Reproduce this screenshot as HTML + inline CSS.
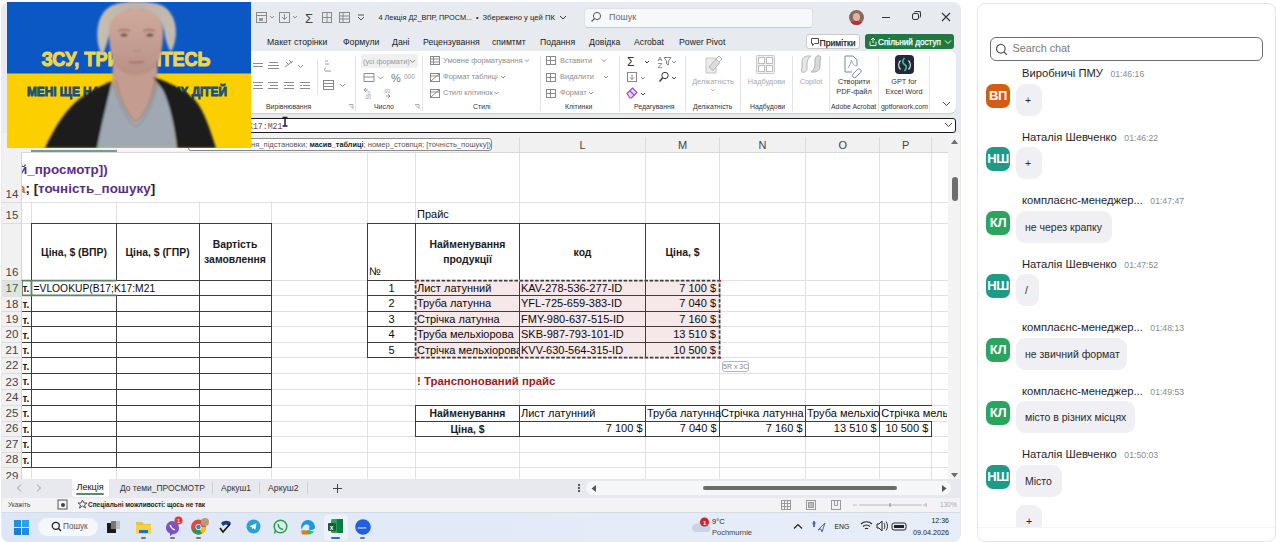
<!DOCTYPE html>
<html><head><meta charset="utf-8">
<style>
*{margin:0;padding:0;box-sizing:border-box}
html,body{width:1276px;height:542px;overflow:hidden;background:#fff;font-family:"Liberation Sans",sans-serif;color:#222}
.a{position:absolute;white-space:nowrap}
#xl{position:absolute;left:0;top:0;width:962px;height:542px;overflow:hidden}
#chat{position:absolute;left:977px;top:2.5px;width:299px;height:539px;border:1px solid #e6e6e6;border-radius:8px;background:#fff;overflow:hidden}
.av{position:absolute;width:24px;height:24px;border-radius:7px;color:#fff;font-weight:bold;font-size:13px;text-align:center;line-height:24px;letter-spacing:-0.4px}
.nm{position:absolute;font-size:11.2px;color:#1e1e1e;white-space:nowrap}
.ts{font-size:8.7px;color:#8a8a8a;margin-left:7.5px}
.bb{position:absolute;background:#f0f0f4;border-radius:9px;height:32px;font-size:10.5px;color:#2a2a2a;line-height:32px;padding:0 9px;white-space:nowrap}

</style></head><body>
<div id="xl">
<div class="a" style="left:1px;top:2px;width:960px;height:540px;background:#e7ebef;border-radius:8px"></div>
<!-- title bar icons -->
<svg class="a" style="left:250px;top:8px" width="130" height="20" viewBox="0 0 130 20">
 <g fill="none" stroke="#8a8a8a" stroke-width="1">
  <rect x="6.5" y="4.5" width="10" height="10"/><line x1="6.5" y1="7.5" x2="16.5" y2="7.5"/><rect x="9" y="10" width="4" height="3" fill="#9a9a9a" stroke="none"/>
  <polyline points="20,8 22,10 24,8"/>
  <rect x="29.5" y="4.5" width="10" height="10"/><polyline points="32,9 34.5,11.5 37,9"/><line x1="34.5" y1="6" x2="34.5" y2="11.5"/>
  <polyline points="43,8 45,10 47,8"/>
  <rect x="72.5" y="4.5" width="9" height="10"/><line x1="77" y1="4.5" x2="77" y2="14.5"/><line x1="72.5" y1="9.5" x2="81.5" y2="9.5"/>
  <rect x="89.5" y="4.5" width="10" height="10"/><line x1="89.5" y1="8" x2="99.5" y2="8"/><line x1="89.5" y1="11" x2="99.5" y2="11"/><line x1="93" y1="4.5" x2="93" y2="14.5"/>
  <polyline points="108,9 111,12 114,9" stroke="#555"/><line x1="108" y1="7" x2="114" y2="7" stroke="#555"/>
 </g>
 <text x="55" y="15" font-family="Liberation Sans" font-size="13" fill="#444">Σ</text>
</svg>
<div class="a" style="left:378.5px;top:12.5px;font-size:7.3px;color:#222">4 Лекція Д2_ВПР, ПРОСМ...</div><div class="a" style="left:476px;top:12.5px;font-size:7.3px;color:#222">•</div><div class="a" style="left:482.5px;top:12.5px;font-size:7.65px;color:#222">Збережено у цей ПК</div><svg class="a" style="left:559px;top:15px" width="8" height="6"><polyline points="1,1 4,4 7,1" fill="none" stroke="#333" stroke-width="1"/></svg>
<div class="a" style="left:584px;top:8px;width:229px;height:19.5px;background:#f7f8f9;border:1px solid #dfe1e4;border-bottom-color:#c9ccd0;border-radius:4px"></div>
<svg class="a" style="left:590px;top:11px" width="12" height="12" viewBox="0 0 12 12"><circle cx="7" cy="5" r="3.6" fill="none" stroke="#555" stroke-width="1"/><line x1="4.4" y1="7.6" x2="1.5" y2="10.5" stroke="#555" stroke-width="1.1"/></svg>
<div class="a" style="left:609px;top:12px;font-size:9px;color:#6b6b6b">Пошук</div>
<div class="a" style="left:849px;top:10px;width:15px;height:15px;border-radius:50%;overflow:hidden;background:#8a6a5a"><div class="a" style="left:4px;top:3px;width:7px;height:8px;border-radius:50%;background:#e0b4a4"></div><div class="a" style="left:1px;top:11px;width:13px;height:6px;border-radius:50%;background:#b8303a"></div></div>
<div class="a" style="left:882px;top:17px;width:8px;height:1px;background:#333"></div>
<div class="a" style="left:912px;top:13px;width:7px;height:7px;border:1px solid #333;border-radius:2px"></div>
<div class="a" style="left:914px;top:11px;width:7px;height:7px;border-top:1px solid #333;border-right:1px solid #333;border-radius:2px"></div>
<svg class="a" style="left:941px;top:12px" width="10" height="10" viewBox="0 0 10 10"><path d="M1 1L9 9M9 1L1 9" stroke="#333" stroke-width="1.1"/></svg>
<!-- tabs -->
<div class="a" style="left:267px;top:37px;font-size:8.7px;color:#222">Макет сторінки</div>
<div class="a" style="left:343px;top:37px;font-size:8.7px;color:#222">Формули</div>
<div class="a" style="left:392px;top:37px;font-size:8.7px;color:#222">Дані</div>
<div class="a" style="left:423px;top:37px;font-size:8.7px;color:#222">Рецензування</div>
<div class="a" style="left:492px;top:37px;font-size:8.7px;color:#222">спимтмт</div>
<div class="a" style="left:540px;top:37px;font-size:8.7px;color:#222">Подання</div>
<div class="a" style="left:589px;top:37px;font-size:8.7px;color:#222">Довідка</div>
<div class="a" style="left:634px;top:37px;font-size:8.7px;color:#222">Acrobat</div>
<div class="a" style="left:679px;top:37px;font-size:8.7px;color:#222">Power Pivot</div>
<div class="a" style="left:806px;top:34px;width:54px;height:15px;background:#fff;border:1px solid #c9c9c9;border-radius:3px"></div>
<svg class="a" style="left:810px;top:37px" width="10" height="10" viewBox="0 0 10 10"><path d="M1.5 1.5h7v5h-4l-2 2v-2h-1z" fill="none" stroke="#333" stroke-width="0.9"/></svg>
<div class="a" style="left:819.5px;top:37.5px;font-size:8.6px;color:#222;-webkit-text-stroke:0.25px #222">Примітки</div>
<div class="a" style="left:865px;top:34px;width:89px;height:15px;background:#1f7a3f;border-radius:3px"></div>
<svg class="a" style="left:868px;top:37px" width="10" height="10" viewBox="0 0 10 10"><path d="M2 4.5v4h6v-4M5 1v5M3 3l2-2 2 2" fill="none" stroke="#fff" stroke-width="0.9"/></svg>
<div class="a" style="left:878px;top:37.5px;font-size:8.2px;color:#fff;-webkit-text-stroke:0.25px #fff">Спільний доступ</div>
<svg class="a" style="left:944px;top:39px" width="8" height="6" viewBox="0 0 8 6"><polyline points="1,1.5 4,4.5 7,1.5" fill="none" stroke="#fff" stroke-width="1"/></svg>

<div class="a" style="left:100px;top:51px;width:856px;height:62px;background:#fff;border-radius:6px;box-shadow:0 1px 1px rgba(0,0,0,0.12)"></div>
<!-- alignment group icons -->
<svg class="a" style="left:250px;top:51px" width="710" height="62" viewBox="250 51 710 62">
 <g stroke="#8c8c8c" stroke-width="1" fill="none">
  <!-- row1 align -->
  <path d="M253 63.5h10M253 66.5h10"/>
  <path d="M268 65.5h11M268 68.5h11M269 62.5h9"/>
  <path d="M285 67l8-6M286 62l3 3M289 60l3 3"/>
  <polyline points="298,65 300.5,67.5 303,65"/>
  <!-- row2 -->
  <path d="M253 82.5h10M254 85.5h8M253 88.5h10"/>
  <path d="M268 82.5h10M270 85.5h8M268 88.5h10"/>
  <path d="M284 82.5h10M287 85.5h7M284 88.5h10M284 85.5h2"/>
  <path d="M300 82.5h10M303 85.5h7M300 88.5h10M300 85.5h2"/>
  <line x1="317.5" y1="59" x2="317.5" y2="95" stroke="#e3e3e3"/>
  <!-- wrap / merge -->
  <path d="M325 61h3M325 64h4M326 68c-2 0-2 3 0 3h5" stroke="#999"/>
  <rect x="323.5" y="80.5" width="10" height="9" stroke="#888"/><path d="M323.5 83.5h10M323.5 86.5h10"/>
  <polyline points="340,84 342.5,86.5 345,84"/>
  <path d="M349 104.5h4v4M353 108.5l-3-3" stroke="#aaa"/>
  <line x1="355.5" y1="56" x2="355.5" y2="111" stroke="#e3e3e3"/>
  <!-- number -->
  <path d="M364 73.5h10v8h-10zM364 77h10" stroke="#8c8c8c"/>
  <polyline points="378,76.5 380.5,79 383,76.5"/>
  <path d="M364 90h4M364 90l2-2M364 90l2 2M386 96h4M390 96l-2-2M390 96l-2 2" stroke="#999"/>
  <path d="M415 104.5h4v4M419 108.5l-3-3" stroke="#aaa"/>
  <line x1="422.5" y1="56" x2="422.5" y2="111" stroke="#e3e3e3"/>
  <!-- styles icons -->
  <rect x="430.5" y="56.5" width="9" height="8" stroke="#888"/><path d="M430.5 59h9M430.5 62h9M433.5 56.5v8"/>
  <rect x="430.5" y="73.5" width="9" height="8" stroke="#888"/><path d="M431 81l8-7M430.5 76h9"/>
  <rect x="430.5" y="89.5" width="9" height="8" stroke="#888"/><path d="M431 97l8-7M430.5 92h9"/>
  <polyline points="525,59.5 527,61.5 529,59.5"/>
  <polyline points="501,76 503,78 505,76"/>
  <polyline points="494.5,92 496.5,94 498.5,92"/>
  <line x1="540.5" y1="56" x2="540.5" y2="111" stroke="#e3e3e3"/>
  <!-- cells icons -->
  <rect x="546.5" y="56.5" width="9" height="8" stroke="#888"/><path d="M546.5 60.5h9M550.5 56.5v8"/>
  <rect x="546.5" y="73.5" width="9" height="8" stroke="#888"/><path d="M546.5 77.5h9M550.5 73.5v8"/>
  <rect x="546.5" y="89.5" width="9" height="8" stroke="#888"/><path d="M546.5 93.5h9M550.5 89.5v8"/>
  <polyline points="602,59.5 604,61.5 606,59.5"/>
  <polyline points="604,76 606,78 608,76"/>
  <polyline points="589,92 591,94 593,92"/>
  <line x1="619.5" y1="56" x2="619.5" y2="111" stroke="#e3e3e3"/>
  <!-- editing -->
  <rect x="627.5" y="72.5" width="9" height="9" stroke="#888"/><path d="M632 74.5v5M630 77.5l2 2 2-2"/>
  <polyline points="645,61 647,63 649,61" stroke="#444"/>
  <polyline points="641,77 643,79 645,77"/>
  <polyline points="641,93 643,95 645,93" stroke="#444"/>
  <polyline points="672,61 674,63 676,61"/>
  <polyline points="672,77 674,79 676,77" stroke="#444"/>
  <circle cx="665" cy="75.5" r="3.2" stroke="#333"/><line x1="662.8" y1="77.8" x2="659.5" y2="81.5" stroke="#333" stroke-width="1.3"/>
  <path d="M658 61l2-4 2 4M658.7 59.8h2.6M658 63.5h4l-4 4h4" stroke="#777" stroke-width="0.8"/><path d="M664 57.5h7l-2.6 3.5v4l-1.8-1v-3z" stroke="#777" stroke-width="0.9"/>
  <line x1="685.5" y1="56" x2="685.5" y2="111" stroke="#e3e3e3"/>
  <!-- delikatnist icon -->
  <path d="M706 58h10v15h-10z" fill="#ececec" stroke="#c4c4c4"/><path d="M709 67l7-8 4 3.5-7 8z" fill="#dcdcdc" stroke="#b5b5b5"/><path d="M716 59l3-3 3 3-3 3" fill="none" stroke="#b5b5b5"/>
  <polyline points="711,89 713,91 715,89" stroke="#bbb"/>
  <line x1="740.5" y1="56" x2="740.5" y2="111" stroke="#e3e3e3"/>
  <!-- add-ins grid -->
  <rect x="756.5" y="55.5" width="18" height="18" rx="1" fill="#f1f1f1" stroke="#c8c8c8"/>
  <rect x="758.5" y="57.5" width="6" height="6" fill="#fff" stroke="#bdbdbd"/><rect x="766.5" y="57.5" width="6" height="6" fill="#fff" stroke="#bdbdbd"/>
  <rect x="758.5" y="65.5" width="6" height="6" fill="#fff" stroke="#bdbdbd"/><rect x="766.5" y="65.5" width="6" height="6" fill="#fff" stroke="#bdbdbd"/>
  <line x1="792.5" y1="56" x2="792.5" y2="111" stroke="#e3e3e3"/>
  <!-- copilot -->
  <path d="M802 62c0-4 3-6 6-6h3c-3 2-4 5-4 8v4c0 3-2 5-5 4-1-1-1-3 0-4z" fill="#e6e6e6" stroke="#b8b8b8"/><path d="M820 66c0 4-3 6-6 6h-3c3-2 4-5 4-8v-4c0-3 2-5 5-4 1 1 1 3 0 4z" fill="#d9d9d9" stroke="#b0b0b0"/>
  <line x1="829.5" y1="56" x2="829.5" y2="111" stroke="#e3e3e3"/>
  <!-- adobe -->
  <path d="M852 72h-7v-16h8l4 4v6" stroke="#6f86b8"/><path d="M848 68c2-3 3-5 3.5-8 .5 3 2 5 5 6.5" stroke="#8a9ccc" stroke-width="0.9"/>
  <path d="M853 74l4.5-4.5a2 2 0 0 1 3 3l-4.5 4.5a2 2 0 0 1-3-3z" stroke="#6f86b8"/>
  <line x1="878.5" y1="56" x2="878.5" y2="111" stroke="#e3e3e3"/>
  <line x1="929.5" y1="56" x2="929.5" y2="111" stroke="#e3e3e3"/>
  <polyline points="943,102 946.5,105.5 950,102" stroke="#444"/>
 </g>
 <g fill="#444" font-family="Liberation Sans">
  <text x="627" y="66" font-size="12" fill="#333">Σ</text>
  <text x="391" y="82" font-size="11" fill="#777">%</text>
  <text x="404" y="79" font-size="6.5" fill="#999">000</text>
  <text x="366" y="95" font-size="5" fill="#999">.0</text>
  <text x="364" y="99" font-size="5" fill="#999">.00</text>
  <text x="383" y="93" font-size="5" fill="#999">.00</text>
 </g>
 <!-- eraser purple -->
 <path d="M627 93.5l5.5-5.5 4.5 4.5-5.5 5.5h-1.5z" fill="#e9d3f3" stroke="#9a4cc4" stroke-width="1.1"/><path d="M630 91l4.5 4.5" stroke="#9a4cc4" stroke-width="1.1"/>
 <!-- gpt icon -->
 <rect x="895" y="55" width="19" height="19" rx="4" fill="#212a3b"/>
 <path d="M900.5 60.5c-2.5 2.5-2.5 6.5 0 9M908.5 60.5c2.5 2.5 2.5 6.5 0 9" stroke="#e8ecef" stroke-width="1.1" fill="none"/><path d="M904.5 58c-2.5 3-2.5 5 0 6.5s2.5 3.5 0 6.5c2.5-3 2.5-5 0-6.5s-2.5-3.5 0-6.5z" fill="#3fc1a6" stroke="#3fc1a6" stroke-width="1.6"/>
</svg>
<div class="a" style="left:361px;top:54px;width:57px;height:14px;background:#f0f0f0;border-radius:3px"></div>
<div class="a" style="left:363px;top:57px;font-size:7.4px;color:#9a9a9a">(усі формати)</div>
<svg class="a" style="left:409px;top:59px" width="7" height="5"><polyline points="1,1 3.5,3.5 6,1" fill="none" stroke="#888"/></svg>
<div class="a" style="left:443px;top:56px;font-size:7.5px;color:#8e8e8e">Умовне форматування</div>
<div class="a" style="left:443px;top:72px;font-size:7.5px;color:#8e8e8e">Формат таблиці</div>
<div class="a" style="left:443px;top:88px;font-size:7.5px;color:#8e8e8e">Стилі клітинок</div>
<div class="a" style="left:560px;top:56px;font-size:7.5px;color:#8e8e8e">Вставити</div>
<div class="a" style="left:560px;top:72px;font-size:7.5px;color:#8e8e8e">Видалити</div>
<div class="a" style="left:560px;top:88px;font-size:7.5px;color:#8e8e8e">Формат</div>
<div class="a" style="left:690px;top:77px;width:46px;text-align:center;font-size:7.3px;color:#a8a8a8">Делікатність</div>
<div class="a" style="left:744px;top:77px;width:45px;text-align:center;font-size:7.3px;color:#a8a8a8">Надбудови</div>
<div class="a" style="left:795px;top:77px;width:32px;text-align:center;font-size:7.3px;color:#a8a8a8">Copilot</div>
<div class="a" style="left:831px;top:77px;width:46px;text-align:center;font-size:7.3px;color:#333;line-height:9.5px">Створити<br>PDF-файл</div>
<div class="a" style="left:880px;top:77px;width:48px;text-align:center;font-size:7.3px;color:#333;line-height:9.5px">GPT for<br>Excel Word</div>
<div class="a" style="left:266px;top:103px;font-size:6.9px;color:#333">Вирівнювання</div>
<div class="a" style="left:374px;top:103px;font-size:6.9px;color:#333">Число</div>
<div class="a" style="left:473px;top:103px;font-size:6.9px;color:#333">Стилі</div>
<div class="a" style="left:565px;top:103px;font-size:6.9px;color:#333">Клітинки</div>
<div class="a" style="left:634px;top:103px;font-size:6.9px;color:#333">Редагування</div>
<div class="a" style="left:693px;top:103px;font-size:6.9px;color:#333">Делікатність</div>
<div class="a" style="left:750px;top:103px;font-size:6.9px;color:#333">Надбудови</div>
<div class="a" style="left:831px;top:103px;font-size:6.9px;color:#333">Adobe Acrobat</div>
<div class="a" style="left:881px;top:103px;font-size:6.9px;color:#333">gptforwork.com</div>
<!-- formula bar -->
<div class="a" style="left:200px;top:118px;width:756px;height:15px;background:#fff;border:1.6px solid #1a1a1a;border-radius:3px"></div>
<div class="a" style="left:248px;top:121.5px;font-family:'Liberation Mono',monospace;font-size:8.2px;color:#7e4646;letter-spacing:0px">K17:M21</div>
<svg class="a" style="left:281px;top:116px" width="8" height="12"><path d="M1.5 1.5h5M4 1.5v8.5M1.5 10h5" stroke="#24183a" stroke-width="1.5"/></svg>
<svg class="a" style="left:944px;top:122px" width="9" height="6"><polyline points="1,1 4.5,4.5 8,1" fill="none" stroke="#444" stroke-width="1"/></svg>

<div class="a" style="left:2px;top:133px;width:946px;height:20px;background:#f1f1f1;border-bottom:1px solid #d6d6d6"></div>
<div class="a" style="left:2px;top:152px;width:20px;height:327px;background:#f1f1f1;border-right:1px solid #d6d6d6"></div>
<div class="a" style="left:22px;top:153px;width:926px;height:326px;background:#fff"></div>
<div class="a" style="left:948px;top:133px;width:12px;height:346px;background:#f3f3f3"></div>
<svg class="a" style="left:950px;top:138px" width="9" height="8"><polygon points="1,6 4.5,1.5 8,6" fill="#6d6d6d"/></svg>
<svg class="a" style="left:950px;top:471px" width="9" height="8"><polygon points="1,2 4.5,6.5 8,2" fill="#6d6d6d"/></svg>
<div class="a" style="left:952px;top:177px;width:6px;height:24px;background:#6e6e6e;border-radius:3px"></div>
<div class="a" style="left:416px;top:281px;width:304px;height:77px;background:#f6e8e8"></div>
<svg class="a" style="left:0;top:0" width="962" height="542">
<line x1="22" y1="202.5" x2="948" y2="202.5" stroke="#e0e0e0"/>
<line x1="22" y1="223.5" x2="948" y2="223.5" stroke="#e0e0e0"/>
<line x1="22" y1="280.5" x2="948" y2="280.5" stroke="#e0e0e0"/>
<line x1="22" y1="295.5" x2="948" y2="295.5" stroke="#e0e0e0"/>
<line x1="22" y1="311.5" x2="948" y2="311.5" stroke="#e0e0e0"/>
<line x1="22" y1="326.5" x2="948" y2="326.5" stroke="#e0e0e0"/>
<line x1="22" y1="342.5" x2="948" y2="342.5" stroke="#e0e0e0"/>
<line x1="22" y1="357.5" x2="948" y2="357.5" stroke="#e0e0e0"/>
<line x1="22" y1="373.5" x2="948" y2="373.5" stroke="#e0e0e0"/>
<line x1="22" y1="389.5" x2="948" y2="389.5" stroke="#e0e0e0"/>
<line x1="22" y1="405.5" x2="948" y2="405.5" stroke="#e0e0e0"/>
<line x1="22" y1="421.5" x2="948" y2="421.5" stroke="#e0e0e0"/>
<line x1="22" y1="436.5" x2="948" y2="436.5" stroke="#e0e0e0"/>
<line x1="22" y1="452.5" x2="948" y2="452.5" stroke="#e0e0e0"/>
<line x1="22" y1="467.5" x2="948" y2="467.5" stroke="#e0e0e0"/>
<line x1="31.5" y1="202.5" x2="31.5" y2="223.5" stroke="#e0e0e0"/>
<line x1="31.5" y1="223.5" x2="31.5" y2="280.5" stroke="#e0e0e0"/>
<line x1="31.5" y1="280.5" x2="31.5" y2="295.5" stroke="#e0e0e0"/>
<line x1="31.5" y1="295.5" x2="31.5" y2="311.5" stroke="#e0e0e0"/>
<line x1="31.5" y1="311.5" x2="31.5" y2="326.5" stroke="#e0e0e0"/>
<line x1="31.5" y1="326.5" x2="31.5" y2="342.5" stroke="#e0e0e0"/>
<line x1="31.5" y1="342.5" x2="31.5" y2="357.5" stroke="#e0e0e0"/>
<line x1="31.5" y1="357.5" x2="31.5" y2="373.5" stroke="#e0e0e0"/>
<line x1="31.5" y1="373.5" x2="31.5" y2="389.5" stroke="#e0e0e0"/>
<line x1="31.5" y1="389.5" x2="31.5" y2="405.5" stroke="#e0e0e0"/>
<line x1="31.5" y1="405.5" x2="31.5" y2="421.5" stroke="#e0e0e0"/>
<line x1="31.5" y1="421.5" x2="31.5" y2="436.5" stroke="#e0e0e0"/>
<line x1="31.5" y1="436.5" x2="31.5" y2="452.5" stroke="#e0e0e0"/>
<line x1="31.5" y1="452.5" x2="31.5" y2="467.5" stroke="#e0e0e0"/>
<line x1="31.5" y1="467.5" x2="31.5" y2="479.5" stroke="#e0e0e0"/>
<line x1="116.5" y1="202.5" x2="116.5" y2="223.5" stroke="#e0e0e0"/>
<line x1="116.5" y1="223.5" x2="116.5" y2="280.5" stroke="#e0e0e0"/>
<line x1="116.5" y1="295.5" x2="116.5" y2="311.5" stroke="#e0e0e0"/>
<line x1="116.5" y1="311.5" x2="116.5" y2="326.5" stroke="#e0e0e0"/>
<line x1="116.5" y1="326.5" x2="116.5" y2="342.5" stroke="#e0e0e0"/>
<line x1="116.5" y1="342.5" x2="116.5" y2="357.5" stroke="#e0e0e0"/>
<line x1="116.5" y1="357.5" x2="116.5" y2="373.5" stroke="#e0e0e0"/>
<line x1="116.5" y1="373.5" x2="116.5" y2="389.5" stroke="#e0e0e0"/>
<line x1="116.5" y1="389.5" x2="116.5" y2="405.5" stroke="#e0e0e0"/>
<line x1="116.5" y1="405.5" x2="116.5" y2="421.5" stroke="#e0e0e0"/>
<line x1="116.5" y1="421.5" x2="116.5" y2="436.5" stroke="#e0e0e0"/>
<line x1="116.5" y1="436.5" x2="116.5" y2="452.5" stroke="#e0e0e0"/>
<line x1="116.5" y1="452.5" x2="116.5" y2="467.5" stroke="#e0e0e0"/>
<line x1="116.5" y1="467.5" x2="116.5" y2="479.5" stroke="#e0e0e0"/>
<line x1="199.5" y1="202.5" x2="199.5" y2="223.5" stroke="#e0e0e0"/>
<line x1="199.5" y1="223.5" x2="199.5" y2="280.5" stroke="#e0e0e0"/>
<line x1="199.5" y1="280.5" x2="199.5" y2="295.5" stroke="#e0e0e0"/>
<line x1="199.5" y1="295.5" x2="199.5" y2="311.5" stroke="#e0e0e0"/>
<line x1="199.5" y1="311.5" x2="199.5" y2="326.5" stroke="#e0e0e0"/>
<line x1="199.5" y1="326.5" x2="199.5" y2="342.5" stroke="#e0e0e0"/>
<line x1="199.5" y1="342.5" x2="199.5" y2="357.5" stroke="#e0e0e0"/>
<line x1="199.5" y1="357.5" x2="199.5" y2="373.5" stroke="#e0e0e0"/>
<line x1="199.5" y1="373.5" x2="199.5" y2="389.5" stroke="#e0e0e0"/>
<line x1="199.5" y1="389.5" x2="199.5" y2="405.5" stroke="#e0e0e0"/>
<line x1="199.5" y1="405.5" x2="199.5" y2="421.5" stroke="#e0e0e0"/>
<line x1="199.5" y1="421.5" x2="199.5" y2="436.5" stroke="#e0e0e0"/>
<line x1="199.5" y1="436.5" x2="199.5" y2="452.5" stroke="#e0e0e0"/>
<line x1="199.5" y1="452.5" x2="199.5" y2="467.5" stroke="#e0e0e0"/>
<line x1="199.5" y1="467.5" x2="199.5" y2="479.5" stroke="#e0e0e0"/>
<line x1="271.5" y1="202.5" x2="271.5" y2="223.5" stroke="#e0e0e0"/>
<line x1="271.5" y1="223.5" x2="271.5" y2="280.5" stroke="#e0e0e0"/>
<line x1="271.5" y1="280.5" x2="271.5" y2="295.5" stroke="#e0e0e0"/>
<line x1="271.5" y1="295.5" x2="271.5" y2="311.5" stroke="#e0e0e0"/>
<line x1="271.5" y1="311.5" x2="271.5" y2="326.5" stroke="#e0e0e0"/>
<line x1="271.5" y1="326.5" x2="271.5" y2="342.5" stroke="#e0e0e0"/>
<line x1="271.5" y1="342.5" x2="271.5" y2="357.5" stroke="#e0e0e0"/>
<line x1="271.5" y1="357.5" x2="271.5" y2="373.5" stroke="#e0e0e0"/>
<line x1="271.5" y1="373.5" x2="271.5" y2="389.5" stroke="#e0e0e0"/>
<line x1="271.5" y1="389.5" x2="271.5" y2="405.5" stroke="#e0e0e0"/>
<line x1="271.5" y1="405.5" x2="271.5" y2="421.5" stroke="#e0e0e0"/>
<line x1="271.5" y1="421.5" x2="271.5" y2="436.5" stroke="#e0e0e0"/>
<line x1="271.5" y1="436.5" x2="271.5" y2="452.5" stroke="#e0e0e0"/>
<line x1="271.5" y1="452.5" x2="271.5" y2="467.5" stroke="#e0e0e0"/>
<line x1="271.5" y1="467.5" x2="271.5" y2="479.5" stroke="#e0e0e0"/>
<line x1="367.5" y1="152.5" x2="367.5" y2="202.5" stroke="#e0e0e0"/>
<line x1="367.5" y1="202.5" x2="367.5" y2="223.5" stroke="#e0e0e0"/>
<line x1="367.5" y1="223.5" x2="367.5" y2="280.5" stroke="#e0e0e0"/>
<line x1="367.5" y1="280.5" x2="367.5" y2="295.5" stroke="#e0e0e0"/>
<line x1="367.5" y1="295.5" x2="367.5" y2="311.5" stroke="#e0e0e0"/>
<line x1="367.5" y1="311.5" x2="367.5" y2="326.5" stroke="#e0e0e0"/>
<line x1="367.5" y1="326.5" x2="367.5" y2="342.5" stroke="#e0e0e0"/>
<line x1="367.5" y1="342.5" x2="367.5" y2="357.5" stroke="#e0e0e0"/>
<line x1="367.5" y1="357.5" x2="367.5" y2="373.5" stroke="#e0e0e0"/>
<line x1="367.5" y1="373.5" x2="367.5" y2="389.5" stroke="#e0e0e0"/>
<line x1="367.5" y1="389.5" x2="367.5" y2="405.5" stroke="#e0e0e0"/>
<line x1="367.5" y1="405.5" x2="367.5" y2="421.5" stroke="#e0e0e0"/>
<line x1="367.5" y1="421.5" x2="367.5" y2="436.5" stroke="#e0e0e0"/>
<line x1="367.5" y1="436.5" x2="367.5" y2="452.5" stroke="#e0e0e0"/>
<line x1="367.5" y1="452.5" x2="367.5" y2="467.5" stroke="#e0e0e0"/>
<line x1="367.5" y1="467.5" x2="367.5" y2="479.5" stroke="#e0e0e0"/>
<line x1="415.5" y1="152.5" x2="415.5" y2="202.5" stroke="#e0e0e0"/>
<line x1="415.5" y1="202.5" x2="415.5" y2="223.5" stroke="#e0e0e0"/>
<line x1="415.5" y1="223.5" x2="415.5" y2="280.5" stroke="#e0e0e0"/>
<line x1="415.5" y1="280.5" x2="415.5" y2="295.5" stroke="#e0e0e0"/>
<line x1="415.5" y1="295.5" x2="415.5" y2="311.5" stroke="#e0e0e0"/>
<line x1="415.5" y1="311.5" x2="415.5" y2="326.5" stroke="#e0e0e0"/>
<line x1="415.5" y1="326.5" x2="415.5" y2="342.5" stroke="#e0e0e0"/>
<line x1="415.5" y1="342.5" x2="415.5" y2="357.5" stroke="#e0e0e0"/>
<line x1="415.5" y1="357.5" x2="415.5" y2="373.5" stroke="#e0e0e0"/>
<line x1="415.5" y1="373.5" x2="415.5" y2="389.5" stroke="#e0e0e0"/>
<line x1="415.5" y1="389.5" x2="415.5" y2="405.5" stroke="#e0e0e0"/>
<line x1="415.5" y1="405.5" x2="415.5" y2="421.5" stroke="#e0e0e0"/>
<line x1="415.5" y1="421.5" x2="415.5" y2="436.5" stroke="#e0e0e0"/>
<line x1="415.5" y1="436.5" x2="415.5" y2="452.5" stroke="#e0e0e0"/>
<line x1="415.5" y1="452.5" x2="415.5" y2="467.5" stroke="#e0e0e0"/>
<line x1="415.5" y1="467.5" x2="415.5" y2="479.5" stroke="#e0e0e0"/>
<line x1="519.5" y1="152.5" x2="519.5" y2="202.5" stroke="#e0e0e0"/>
<line x1="519.5" y1="202.5" x2="519.5" y2="223.5" stroke="#e0e0e0"/>
<line x1="519.5" y1="223.5" x2="519.5" y2="280.5" stroke="#e0e0e0"/>
<line x1="519.5" y1="280.5" x2="519.5" y2="295.5" stroke="#e0e0e0"/>
<line x1="519.5" y1="295.5" x2="519.5" y2="311.5" stroke="#e0e0e0"/>
<line x1="519.5" y1="311.5" x2="519.5" y2="326.5" stroke="#e0e0e0"/>
<line x1="519.5" y1="326.5" x2="519.5" y2="342.5" stroke="#e0e0e0"/>
<line x1="519.5" y1="342.5" x2="519.5" y2="357.5" stroke="#e0e0e0"/>
<line x1="519.5" y1="357.5" x2="519.5" y2="373.5" stroke="#e0e0e0"/>
<line x1="519.5" y1="389.5" x2="519.5" y2="405.5" stroke="#e0e0e0"/>
<line x1="519.5" y1="405.5" x2="519.5" y2="421.5" stroke="#e0e0e0"/>
<line x1="519.5" y1="421.5" x2="519.5" y2="436.5" stroke="#e0e0e0"/>
<line x1="519.5" y1="436.5" x2="519.5" y2="452.5" stroke="#e0e0e0"/>
<line x1="519.5" y1="452.5" x2="519.5" y2="467.5" stroke="#e0e0e0"/>
<line x1="519.5" y1="467.5" x2="519.5" y2="479.5" stroke="#e0e0e0"/>
<line x1="645.5" y1="152.5" x2="645.5" y2="202.5" stroke="#e0e0e0"/>
<line x1="645.5" y1="202.5" x2="645.5" y2="223.5" stroke="#e0e0e0"/>
<line x1="645.5" y1="223.5" x2="645.5" y2="280.5" stroke="#e0e0e0"/>
<line x1="645.5" y1="280.5" x2="645.5" y2="295.5" stroke="#e0e0e0"/>
<line x1="645.5" y1="295.5" x2="645.5" y2="311.5" stroke="#e0e0e0"/>
<line x1="645.5" y1="311.5" x2="645.5" y2="326.5" stroke="#e0e0e0"/>
<line x1="645.5" y1="326.5" x2="645.5" y2="342.5" stroke="#e0e0e0"/>
<line x1="645.5" y1="342.5" x2="645.5" y2="357.5" stroke="#e0e0e0"/>
<line x1="645.5" y1="357.5" x2="645.5" y2="373.5" stroke="#e0e0e0"/>
<line x1="645.5" y1="373.5" x2="645.5" y2="389.5" stroke="#e0e0e0"/>
<line x1="645.5" y1="389.5" x2="645.5" y2="405.5" stroke="#e0e0e0"/>
<line x1="645.5" y1="405.5" x2="645.5" y2="421.5" stroke="#e0e0e0"/>
<line x1="645.5" y1="421.5" x2="645.5" y2="436.5" stroke="#e0e0e0"/>
<line x1="645.5" y1="436.5" x2="645.5" y2="452.5" stroke="#e0e0e0"/>
<line x1="645.5" y1="452.5" x2="645.5" y2="467.5" stroke="#e0e0e0"/>
<line x1="645.5" y1="467.5" x2="645.5" y2="479.5" stroke="#e0e0e0"/>
<line x1="719.5" y1="152.5" x2="719.5" y2="202.5" stroke="#e0e0e0"/>
<line x1="719.5" y1="202.5" x2="719.5" y2="223.5" stroke="#e0e0e0"/>
<line x1="719.5" y1="223.5" x2="719.5" y2="280.5" stroke="#e0e0e0"/>
<line x1="719.5" y1="280.5" x2="719.5" y2="295.5" stroke="#e0e0e0"/>
<line x1="719.5" y1="295.5" x2="719.5" y2="311.5" stroke="#e0e0e0"/>
<line x1="719.5" y1="311.5" x2="719.5" y2="326.5" stroke="#e0e0e0"/>
<line x1="719.5" y1="326.5" x2="719.5" y2="342.5" stroke="#e0e0e0"/>
<line x1="719.5" y1="342.5" x2="719.5" y2="357.5" stroke="#e0e0e0"/>
<line x1="719.5" y1="357.5" x2="719.5" y2="373.5" stroke="#e0e0e0"/>
<line x1="719.5" y1="373.5" x2="719.5" y2="389.5" stroke="#e0e0e0"/>
<line x1="719.5" y1="389.5" x2="719.5" y2="405.5" stroke="#e0e0e0"/>
<line x1="719.5" y1="405.5" x2="719.5" y2="421.5" stroke="#e0e0e0"/>
<line x1="719.5" y1="421.5" x2="719.5" y2="436.5" stroke="#e0e0e0"/>
<line x1="719.5" y1="436.5" x2="719.5" y2="452.5" stroke="#e0e0e0"/>
<line x1="719.5" y1="452.5" x2="719.5" y2="467.5" stroke="#e0e0e0"/>
<line x1="719.5" y1="467.5" x2="719.5" y2="479.5" stroke="#e0e0e0"/>
<line x1="805.5" y1="152.5" x2="805.5" y2="202.5" stroke="#e0e0e0"/>
<line x1="805.5" y1="202.5" x2="805.5" y2="223.5" stroke="#e0e0e0"/>
<line x1="805.5" y1="223.5" x2="805.5" y2="280.5" stroke="#e0e0e0"/>
<line x1="805.5" y1="280.5" x2="805.5" y2="295.5" stroke="#e0e0e0"/>
<line x1="805.5" y1="295.5" x2="805.5" y2="311.5" stroke="#e0e0e0"/>
<line x1="805.5" y1="311.5" x2="805.5" y2="326.5" stroke="#e0e0e0"/>
<line x1="805.5" y1="326.5" x2="805.5" y2="342.5" stroke="#e0e0e0"/>
<line x1="805.5" y1="342.5" x2="805.5" y2="357.5" stroke="#e0e0e0"/>
<line x1="805.5" y1="357.5" x2="805.5" y2="373.5" stroke="#e0e0e0"/>
<line x1="805.5" y1="373.5" x2="805.5" y2="389.5" stroke="#e0e0e0"/>
<line x1="805.5" y1="389.5" x2="805.5" y2="405.5" stroke="#e0e0e0"/>
<line x1="805.5" y1="405.5" x2="805.5" y2="421.5" stroke="#e0e0e0"/>
<line x1="805.5" y1="421.5" x2="805.5" y2="436.5" stroke="#e0e0e0"/>
<line x1="805.5" y1="436.5" x2="805.5" y2="452.5" stroke="#e0e0e0"/>
<line x1="805.5" y1="452.5" x2="805.5" y2="467.5" stroke="#e0e0e0"/>
<line x1="805.5" y1="467.5" x2="805.5" y2="479.5" stroke="#e0e0e0"/>
<line x1="879.5" y1="152.5" x2="879.5" y2="202.5" stroke="#e0e0e0"/>
<line x1="879.5" y1="202.5" x2="879.5" y2="223.5" stroke="#e0e0e0"/>
<line x1="879.5" y1="223.5" x2="879.5" y2="280.5" stroke="#e0e0e0"/>
<line x1="879.5" y1="280.5" x2="879.5" y2="295.5" stroke="#e0e0e0"/>
<line x1="879.5" y1="295.5" x2="879.5" y2="311.5" stroke="#e0e0e0"/>
<line x1="879.5" y1="311.5" x2="879.5" y2="326.5" stroke="#e0e0e0"/>
<line x1="879.5" y1="326.5" x2="879.5" y2="342.5" stroke="#e0e0e0"/>
<line x1="879.5" y1="342.5" x2="879.5" y2="357.5" stroke="#e0e0e0"/>
<line x1="879.5" y1="357.5" x2="879.5" y2="373.5" stroke="#e0e0e0"/>
<line x1="879.5" y1="373.5" x2="879.5" y2="389.5" stroke="#e0e0e0"/>
<line x1="879.5" y1="389.5" x2="879.5" y2="405.5" stroke="#e0e0e0"/>
<line x1="879.5" y1="405.5" x2="879.5" y2="421.5" stroke="#e0e0e0"/>
<line x1="879.5" y1="421.5" x2="879.5" y2="436.5" stroke="#e0e0e0"/>
<line x1="879.5" y1="436.5" x2="879.5" y2="452.5" stroke="#e0e0e0"/>
<line x1="879.5" y1="452.5" x2="879.5" y2="467.5" stroke="#e0e0e0"/>
<line x1="879.5" y1="467.5" x2="879.5" y2="479.5" stroke="#e0e0e0"/>
<line x1="931.5" y1="152.5" x2="931.5" y2="202.5" stroke="#e0e0e0"/>
<line x1="931.5" y1="202.5" x2="931.5" y2="223.5" stroke="#e0e0e0"/>
<line x1="931.5" y1="223.5" x2="931.5" y2="280.5" stroke="#e0e0e0"/>
<line x1="931.5" y1="280.5" x2="931.5" y2="295.5" stroke="#e0e0e0"/>
<line x1="931.5" y1="295.5" x2="931.5" y2="311.5" stroke="#e0e0e0"/>
<line x1="931.5" y1="311.5" x2="931.5" y2="326.5" stroke="#e0e0e0"/>
<line x1="931.5" y1="326.5" x2="931.5" y2="342.5" stroke="#e0e0e0"/>
<line x1="931.5" y1="342.5" x2="931.5" y2="357.5" stroke="#e0e0e0"/>
<line x1="931.5" y1="357.5" x2="931.5" y2="373.5" stroke="#e0e0e0"/>
<line x1="931.5" y1="373.5" x2="931.5" y2="389.5" stroke="#e0e0e0"/>
<line x1="931.5" y1="389.5" x2="931.5" y2="405.5" stroke="#e0e0e0"/>
<line x1="931.5" y1="421.5" x2="931.5" y2="436.5" stroke="#e0e0e0"/>
<line x1="931.5" y1="436.5" x2="931.5" y2="452.5" stroke="#e0e0e0"/>
<line x1="931.5" y1="452.5" x2="931.5" y2="467.5" stroke="#e0e0e0"/>
<line x1="931.5" y1="467.5" x2="931.5" y2="479.5" stroke="#e0e0e0"/>
<line x1="2" y1="202.5" x2="22" y2="202.5" stroke="#dcdcdc"/>
<line x1="2" y1="223.5" x2="22" y2="223.5" stroke="#dcdcdc"/>
<line x1="2" y1="280.5" x2="22" y2="280.5" stroke="#dcdcdc"/>
<line x1="2" y1="295.5" x2="22" y2="295.5" stroke="#dcdcdc"/>
<line x1="2" y1="311.5" x2="22" y2="311.5" stroke="#dcdcdc"/>
<line x1="2" y1="326.5" x2="22" y2="326.5" stroke="#dcdcdc"/>
<line x1="2" y1="342.5" x2="22" y2="342.5" stroke="#dcdcdc"/>
<line x1="2" y1="357.5" x2="22" y2="357.5" stroke="#dcdcdc"/>
<line x1="2" y1="373.5" x2="22" y2="373.5" stroke="#dcdcdc"/>
<line x1="2" y1="389.5" x2="22" y2="389.5" stroke="#dcdcdc"/>
<line x1="2" y1="405.5" x2="22" y2="405.5" stroke="#dcdcdc"/>
<line x1="2" y1="421.5" x2="22" y2="421.5" stroke="#dcdcdc"/>
<line x1="2" y1="436.5" x2="22" y2="436.5" stroke="#dcdcdc"/>
<line x1="2" y1="452.5" x2="22" y2="452.5" stroke="#dcdcdc"/>
<line x1="2" y1="467.5" x2="22" y2="467.5" stroke="#dcdcdc"/>
<line x1="519.5" y1="137" x2="519.5" y2="152" stroke="#dcdcdc"/>
<line x1="645.5" y1="137" x2="645.5" y2="152" stroke="#dcdcdc"/>
<line x1="719.5" y1="137" x2="719.5" y2="152" stroke="#dcdcdc"/>
<line x1="805.5" y1="137" x2="805.5" y2="152" stroke="#dcdcdc"/>
<line x1="879.5" y1="137" x2="879.5" y2="152" stroke="#dcdcdc"/>
<line x1="931.5" y1="137" x2="931.5" y2="152" stroke="#dcdcdc"/>
<line x1="31" y1="223.5" x2="272" y2="223.5" stroke="#3d3d3d"/>
<line x1="22" y1="280.5" x2="272" y2="280.5" stroke="#3d3d3d"/>
<line x1="22" y1="295.5" x2="272" y2="295.5" stroke="#3d3d3d"/>
<line x1="22" y1="311.5" x2="272" y2="311.5" stroke="#3d3d3d"/>
<line x1="22" y1="326.5" x2="272" y2="326.5" stroke="#3d3d3d"/>
<line x1="22" y1="342.5" x2="272" y2="342.5" stroke="#3d3d3d"/>
<line x1="22" y1="357.5" x2="272" y2="357.5" stroke="#3d3d3d"/>
<line x1="22" y1="373.5" x2="272" y2="373.5" stroke="#3d3d3d"/>
<line x1="22" y1="389.5" x2="272" y2="389.5" stroke="#3d3d3d"/>
<line x1="22" y1="405.5" x2="272" y2="405.5" stroke="#3d3d3d"/>
<line x1="22" y1="421.5" x2="272" y2="421.5" stroke="#3d3d3d"/>
<line x1="22" y1="436.5" x2="272" y2="436.5" stroke="#3d3d3d"/>
<line x1="22" y1="452.5" x2="272" y2="452.5" stroke="#3d3d3d"/>
<line x1="22" y1="467.5" x2="272" y2="467.5" stroke="#3d3d3d"/>
<line x1="31.5" y1="223.5" x2="31.5" y2="467.5" stroke="#3d3d3d"/>
<line x1="199.5" y1="223.5" x2="199.5" y2="467.5" stroke="#3d3d3d"/>
<line x1="271.5" y1="223.5" x2="271.5" y2="467.5" stroke="#3d3d3d"/>
<line x1="116.5" y1="223.5" x2="116.5" y2="280.5" stroke="#3d3d3d"/>
<line x1="116.5" y1="295.5" x2="116.5" y2="467.5" stroke="#3d3d3d"/>
<line x1="367" y1="223.5" x2="720" y2="223.5" stroke="#3d3d3d"/>
<line x1="367" y1="280.5" x2="720" y2="280.5" stroke="#3d3d3d"/>
<line x1="367" y1="295.5" x2="720" y2="295.5" stroke="#3d3d3d"/>
<line x1="367" y1="311.5" x2="720" y2="311.5" stroke="#3d3d3d"/>
<line x1="367" y1="326.5" x2="720" y2="326.5" stroke="#3d3d3d"/>
<line x1="367" y1="342.5" x2="720" y2="342.5" stroke="#3d3d3d"/>
<line x1="367" y1="357.5" x2="720" y2="357.5" stroke="#3d3d3d"/>
<line x1="367.5" y1="223.5" x2="367.5" y2="357.5" stroke="#3d3d3d"/>
<line x1="415.5" y1="223.5" x2="415.5" y2="357.5" stroke="#3d3d3d"/>
<line x1="519.5" y1="223.5" x2="519.5" y2="357.5" stroke="#3d3d3d"/>
<line x1="645.5" y1="223.5" x2="645.5" y2="357.5" stroke="#3d3d3d"/>
<line x1="719.5" y1="223.5" x2="719.5" y2="357.5" stroke="#3d3d3d"/>
<line x1="415" y1="405.5" x2="932" y2="405.5" stroke="#3d3d3d"/>
<line x1="415" y1="421.5" x2="932" y2="421.5" stroke="#3d3d3d"/>
<line x1="415" y1="436.5" x2="932" y2="436.5" stroke="#3d3d3d"/>
<line x1="415.5" y1="405.5" x2="415.5" y2="436.5" stroke="#3d3d3d"/>
<line x1="519.5" y1="405.5" x2="519.5" y2="436.5" stroke="#3d3d3d"/>
<line x1="645.5" y1="405.5" x2="645.5" y2="436.5" stroke="#3d3d3d"/>
<line x1="719.5" y1="405.5" x2="719.5" y2="436.5" stroke="#3d3d3d"/>
<line x1="805.5" y1="405.5" x2="805.5" y2="436.5" stroke="#3d3d3d"/>
<line x1="879.5" y1="405.5" x2="879.5" y2="436.5" stroke="#3d3d3d"/>
<line x1="931.5" y1="421.5" x2="931.5" y2="436.5" stroke="#3d3d3d"/>
<path d="M21.8 280.6H116.5M21.8 295.3H116.5M22 280.6V295.3M31.5 280.6V295.3" stroke="#61806b" stroke-width="1.8" fill="none"/>
</svg>
<svg class="a" style="left:0;top:0" width="962" height="542"><rect x="415.6" y="280.6" width="304" height="77" fill="none" stroke="#f4e6e6" stroke-width="1.7"/><rect x="415.6" y="280.6" width="304" height="77" fill="none" stroke="#3c3c3c" stroke-width="1.7" stroke-dasharray="3.6 1.6"/></svg>
<div class="a" style="left:415px;top:280px;width:2px;height:2px;background:#d03030"></div>
<div class="a" style="left:719px;top:280px;width:2px;height:2px;background:#d03030"></div>
<div class="a" style="left:415px;top:357px;width:2px;height:2px;background:#d03030"></div>
<div class="a" style="left:719px;top:357px;width:2px;height:2px;background:#d03030"></div>
<div class="a" style="left:31px;top:150px;width:86px;height:2px;background:#7d9a86"></div>
<div class="a" style="left:572.5px;top:138.5px;width:20px;text-align:center;font-size:11px;color:#444">L</div>
<div class="a" style="left:672.5px;top:138.5px;width:20px;text-align:center;font-size:11px;color:#444">M</div>
<div class="a" style="left:752.5px;top:138.5px;width:20px;text-align:center;font-size:11px;color:#444">N</div>
<div class="a" style="left:832.8px;top:138.5px;width:20px;text-align:center;font-size:11px;color:#444">O</div>
<div class="a" style="left:895.6px;top:138.5px;width:20px;text-align:center;font-size:11px;color:#444">P</div>
<div class="a" style="left:2px;top:187.3px;width:20px;text-align:center;font-size:11.5px;line-height:14px;color:#444">14</div>
<div class="a" style="left:2px;top:208.4px;width:20px;text-align:center;font-size:11.5px;line-height:14px;color:#444">15</div>
<div class="a" style="left:2px;top:265.1px;width:20px;text-align:center;font-size:11.5px;line-height:14px;color:#444">16</div>
<div class="a" style="left:2px;top:281px;width:20px;height:16px;background:#dfe3e0"></div>
<div class="a" style="left:2px;top:280.8px;width:20px;text-align:center;font-size:11.5px;line-height:14px;color:#2e6b48">17</div>
<div class="a" style="left:2px;top:296.5px;width:20px;text-align:center;font-size:11.5px;line-height:14px;color:#444">18</div>
<div class="a" style="left:2px;top:311.8px;width:20px;text-align:center;font-size:11.5px;line-height:14px;color:#444">19</div>
<div class="a" style="left:2px;top:327.3px;width:20px;text-align:center;font-size:11.5px;line-height:14px;color:#444">20</div>
<div class="a" style="left:2px;top:342.7px;width:20px;text-align:center;font-size:11.5px;line-height:14px;color:#444">21</div>
<div class="a" style="left:2px;top:358.2px;width:20px;text-align:center;font-size:11.5px;line-height:14px;color:#444">22</div>
<div class="a" style="left:2px;top:374.7px;width:20px;text-align:center;font-size:11.5px;line-height:14px;color:#444">23</div>
<div class="a" style="left:2px;top:390.4px;width:20px;text-align:center;font-size:11.5px;line-height:14px;color:#444">24</div>
<div class="a" style="left:2px;top:406.2px;width:20px;text-align:center;font-size:11.5px;line-height:14px;color:#444">25</div>
<div class="a" style="left:2px;top:421.3px;width:20px;text-align:center;font-size:11.5px;line-height:14px;color:#444">26</div>
<div class="a" style="left:2px;top:437px;width:20px;text-align:center;font-size:11.5px;line-height:14px;color:#444">27</div>
<div class="a" style="left:2px;top:452.4px;width:20px;text-align:center;font-size:11.5px;line-height:14px;color:#444">28</div>
<div class="a" style="left:2px;top:468.5px;width:20px;text-align:center;font-size:11.5px;line-height:14px;color:#444">29</div>
<div class="a" style="left:22px;top:153px;width:300px;height:49px;overflow:hidden"><div class="a" style="left:-3px;top:9px;font-size:13.4px;font-weight:bold;color:#5a2d8a">й_просмотр])</div><div class="a" style="left:-4px;top:27.5px;font-size:13.4px;font-weight:bold;color:#222"><span style="color:#c96b2c">а</span>; [<span style="color:#5a2d8a">точність_пошуку</span>]</div></div>
<div class="a" style="left:32px;top:245px;width:84px;font-size:10.4px;font-weight:bold;color:#1a1a1a;text-align:center;line-height:15px">Ціна, $ (ВПР)</div>
<div class="a" style="left:116px;top:245px;width:83px;font-size:10.4px;font-weight:bold;color:#1a1a1a;text-align:center;line-height:15px">Ціна, $ (ГПР)</div>
<div class="a" style="left:199px;top:237px;width:72px;font-size:10.4px;font-weight:bold;color:#1a1a1a;text-align:center;line-height:15px">Вартість<br>замовлення</div>
<div class="a" style="left:22.5px;top:283.1px;font-size:10px;font-weight:bold;color:#1a1a1a">т.</div>
<div class="a" style="left:22.5px;top:298.8px;font-size:10px;font-weight:bold;color:#1a1a1a">т.</div>
<div class="a" style="left:22.5px;top:314.5px;font-size:10px;font-weight:bold;color:#1a1a1a">т.</div>
<div class="a" style="left:22.5px;top:329.8px;font-size:10px;font-weight:bold;color:#1a1a1a">т.</div>
<div class="a" style="left:22.5px;top:345.3px;font-size:10px;font-weight:bold;color:#1a1a1a">т.</div>
<div class="a" style="left:22.5px;top:360.7px;font-size:10px;font-weight:bold;color:#1a1a1a">т.</div>
<div class="a" style="left:22.5px;top:376.2px;font-size:10px;font-weight:bold;color:#1a1a1a">т.</div>
<div class="a" style="left:22.5px;top:392.7px;font-size:10px;font-weight:bold;color:#1a1a1a">т.</div>
<div class="a" style="left:22.5px;top:408.4px;font-size:10px;font-weight:bold;color:#1a1a1a">т.</div>
<div class="a" style="left:22.5px;top:424.2px;font-size:10px;font-weight:bold;color:#1a1a1a">т.</div>
<div class="a" style="left:22.5px;top:439.3px;font-size:10px;font-weight:bold;color:#1a1a1a">т.</div>
<div class="a" style="left:22.5px;top:455px;font-size:10px;font-weight:bold;color:#1a1a1a">т.</div>
<div class="a" style="left:33.5px;top:282.5px;font-size:10.3px;color:#0a0a0a">=VLOOKUP(B17;K17:M21</div>
<div class="a" style="left:417px;top:208px;font-size:11px;color:#0a0a0a">Прайс</div>
<div class="a" style="left:416px;top:237px;width:103px;font-size:10.4px;font-weight:bold;color:#1a1a1a;text-align:center;line-height:15px">Найменування<br>продукції</div>
<div class="a" style="left:520px;top:245px;width:125px;font-size:10.4px;font-weight:bold;color:#1a1a1a;text-align:center;line-height:15px">код</div>
<div class="a" style="left:646px;top:245px;width:73px;font-size:10.4px;font-weight:bold;color:#1a1a1a;text-align:center;line-height:15px">Ціна, $</div>
<div class="a" style="left:369px;top:265px;font-size:11px;color:#0a0a0a">№</div>
<div class="a" style="left:368px;top:281.6px;width:47px;text-align:center;font-size:11px;color:#0a0a0a">1</div>
<div class="a" style="left:417px;top:281.6px;width:102px;overflow:hidden;font-size:11px;color:#0a0a0a">Лист латунний</div>
<div class="a" style="left:521px;top:281.6px;font-size:11px;color:#0a0a0a">KAV-278-536-277-ID</div>
<div class="a" style="left:646px;top:281.6px;width:70px;text-align:right;font-size:11px;color:#0a0a0a">7 100 $</div>
<div class="a" style="left:368px;top:297.3px;width:47px;text-align:center;font-size:11px;color:#0a0a0a">2</div>
<div class="a" style="left:417px;top:297.3px;width:102px;overflow:hidden;font-size:11px;color:#0a0a0a">Труба латунна</div>
<div class="a" style="left:521px;top:297.3px;font-size:11px;color:#0a0a0a">YFL-725-659-383-ID</div>
<div class="a" style="left:646px;top:297.3px;width:70px;text-align:right;font-size:11px;color:#0a0a0a">7 040 $</div>
<div class="a" style="left:368px;top:313.0px;width:47px;text-align:center;font-size:11px;color:#0a0a0a">3</div>
<div class="a" style="left:417px;top:313.0px;width:102px;overflow:hidden;font-size:11px;color:#0a0a0a">Стрічка латунна</div>
<div class="a" style="left:521px;top:313.0px;font-size:11px;color:#0a0a0a">FMY-980-637-515-ID</div>
<div class="a" style="left:646px;top:313.0px;width:70px;text-align:right;font-size:11px;color:#0a0a0a">7 160 $</div>
<div class="a" style="left:368px;top:328.3px;width:47px;text-align:center;font-size:11px;color:#0a0a0a">4</div>
<div class="a" style="left:417px;top:328.3px;width:102px;overflow:hidden;font-size:11px;color:#0a0a0a">Труба мельхіорова</div>
<div class="a" style="left:521px;top:328.3px;font-size:11px;color:#0a0a0a">SKB-987-793-101-ID</div>
<div class="a" style="left:646px;top:328.3px;width:70px;text-align:right;font-size:11px;color:#0a0a0a">13 510 $</div>
<div class="a" style="left:368px;top:343.8px;width:47px;text-align:center;font-size:11px;color:#0a0a0a">5</div>
<div class="a" style="left:417px;top:343.8px;width:102px;overflow:hidden;font-size:11px;color:#0a0a0a">Стрічка мельхіорова</div>
<div class="a" style="left:521px;top:343.8px;font-size:11px;color:#0a0a0a">KVV-630-564-315-ID</div>
<div class="a" style="left:646px;top:343.8px;width:70px;text-align:right;font-size:11px;color:#0a0a0a">10 500 $</div>
<div class="a" style="left:722px;top:361px;width:27px;height:11px;border:1px solid #b5b5b5;border-radius:3px;background:#fff;font-size:7px;color:#888;text-align:center;line-height:9px">5R x 3C</div>
<div class="a" style="left:417px;top:375px;font-size:11.4px;font-weight:bold;color:#9e1b1b">! Транспонований прайс</div>
<div class="a" style="left:416px;top:406px;width:103px;font-size:10.4px;font-weight:bold;color:#1a1a1a;text-align:center;line-height:15px">Найменування</div>
<div class="a" style="left:416px;top:422px;width:103px;font-size:10.4px;font-weight:bold;color:#1a1a1a;text-align:center;line-height:15px">Ціна, $</div>
<div class="a" style="left:521.0px;top:406.5px;font-size:11px;color:#0a0a0a">Лист латунний</div>
<div class="a" style="left:519.5px;top:422px;width:123.0px;text-align:right;font-size:11px;color:#0a0a0a">7 100 $</div>
<div class="a" style="left:647.0px;top:406.5px;font-size:11px;color:#0a0a0a">Труба латунна</div>
<div class="a" style="left:645.5px;top:422px;width:71.0px;text-align:right;font-size:11px;color:#0a0a0a">7 040 $</div>
<div class="a" style="left:721.0px;top:406.5px;font-size:11px;color:#0a0a0a">Стрічка латунна</div>
<div class="a" style="left:719.5px;top:422px;width:83.0px;text-align:right;font-size:11px;color:#0a0a0a">7 160 $</div>
<div class="a" style="left:807.0px;top:406.5px;width:73.20000000000005px;overflow:hidden;font-size:11px;color:#0a0a0a">Труба мельхіорова</div>
<div class="a" style="left:805.5px;top:422px;width:71.20000000000005px;text-align:right;font-size:11px;color:#0a0a0a">13 510 $</div>
<div class="a" style="left:881.2px;top:406.5px;width:66.29999999999995px;overflow:hidden;font-size:11px;color:#0a0a0a">Стрічка мельхіорова</div>
<div class="a" style="left:879.7px;top:422px;width:48.59999999999991px;text-align:right;font-size:11px;color:#0a0a0a">10 500 $</div>

<!-- sheet tabs bar -->
<div class="a" style="left:2px;top:479px;width:958px;height:19px;background:#e7e9ee"></div>
<svg class="a" style="left:14px;top:483px" width="30" height="10"><polyline points="7,1.5 3.5,5 7,8.5" fill="none" stroke="#9a9a9a" stroke-width="1"/><polyline points="23,1.5 26.5,5 23,8.5" fill="none" stroke="#9a9a9a" stroke-width="1"/></svg>
<div class="a" style="left:72px;top:479px;width:37px;height:18px;background:#fff;border-radius:0 0 3px 3px"></div>
<div class="a" style="left:76.5px;top:482px;font-size:9.1px;color:#111">Лекція</div>
<div class="a" style="left:76px;top:493px;width:28px;height:2px;background:#5e8a6b;border-radius:1px"></div>
<div class="a" style="left:120px;top:482.5px;font-size:8.45px;color:#333">До теми_ПРОСМОТР</div>
<div class="a" style="left:212px;top:482px;width:1px;height:12px;background:#d0d0d0"></div>
<div class="a" style="left:221px;top:482.5px;font-size:8.5px;color:#333">Аркуш1</div>
<div class="a" style="left:259px;top:482px;width:1px;height:12px;background:#d0d0d0"></div>
<div class="a" style="left:268px;top:482.5px;font-size:8.7px;color:#333">Аркуш2</div>
<div class="a" style="left:307px;top:482px;width:1px;height:12px;background:#d0d0d0"></div>
<svg class="a" style="left:332px;top:483px" width="11" height="11"><path d="M5.5 1v9M1 5.5h9" stroke="#444" stroke-width="1"/></svg>
<div class="a" style="left:578px;top:484px;width:2px;height:2px;background:#555;box-shadow:0 3px 0 #555,0 6px 0 #555"></div>
<div class="a" style="left:586px;top:481px;width:365px;height:14px;background:#f6f7f8;border-radius:7px"></div>
<div class="a" style="left:703px;top:485.8px;width:194px;height:4.6px;background:#6a6a6a;border-radius:3px"></div>
<svg class="a" style="left:590px;top:484px" width="8" height="9"><polygon points="6,1 1.5,4.5 6,8" fill="#555"/></svg>
<svg class="a" style="left:940px;top:484px" width="8" height="9"><polygon points="2,1 6.5,4.5 2,8" fill="#555"/></svg>
<!-- status bar -->
<div class="a" style="left:2px;top:498px;width:958px;height:14px;background:#f3f3f5"></div>
<div class="a" style="left:8px;top:500.5px;font-size:6.4px;color:#444">Укажіть</div>
<svg class="a" style="left:57px;top:499px" width="11" height="11"><rect x="1" y="1" width="9" height="9" fill="none" stroke="#555" stroke-width="1"/><circle cx="6" cy="6" r="2" fill="#444"/></svg>
<svg class="a" style="left:77px;top:499px" width="11" height="11"><path d="M5.5 1l1.5 3h3l-2.5 2 1 3-3-2-3 2 1-3-2.5-2h3z" fill="none" stroke="#444" stroke-width="0.9"/></svg>
<div class="a" style="left:88px;top:500.5px;font-size:6.5px;font-weight:bold;color:#222">Спеціальні можливості: щось не так</div>
<svg class="a" style="left:780px;top:499px" width="150" height="12">
 <g fill="none" stroke="#9a9a9a" stroke-width="1">
  <rect x="1.5" y="1.5" width="9" height="9"/><path d="M1.5 4.5h9M1.5 7.5h9M4.5 1.5v9M7.5 1.5v9"/>
  <rect x="26.5" y="1.5" width="9" height="9"/><rect x="28.5" y="3.5" width="5" height="5" fill="#bbb"/>
  <rect x="51.5" y="1.5" width="9" height="9"/><path d="M54.5 1.5v5h3v-5"/>
  <path d="M73 6h4M79 6h63M143 6h4M146 4v4" stroke="#bbb"/><path d="M110 4v4" stroke="#888"/>
 </g>
</svg>
<div class="a" style="left:940px;top:501px;font-size:6.6px;color:#aaa">130%</div>
<!-- taskbar -->
<div class="a" style="left:2px;top:512px;width:958px;height:30px;background:linear-gradient(90deg,#dde6f6 0%,#e3eaf7 50%,#e8eef8 100%);border-top:1px solid #d5dbe5;border-radius:0 0 8px 8px"></div>
<svg class="a" style="left:14px;top:520px" width="15" height="15"><rect x="0" y="0" width="7" height="7" fill="#1f8fe0"/><rect x="8" y="0" width="7" height="7" fill="#27a2ec"/><rect x="0" y="8" width="7" height="7" fill="#157fd6"/><rect x="8" y="8" width="7" height="7" fill="#1c8ee2"/></svg>
<div class="a" style="left:38px;top:518px;width:60px;height:18px;background:#f4f7fc;border-radius:9px"></div>
<svg class="a" style="left:51px;top:521px" width="11" height="11"><circle cx="4.8" cy="4.8" r="3.5" fill="none" stroke="#222" stroke-width="1.3"/><line x1="7.3" y1="7.3" x2="10" y2="10" stroke="#222" stroke-width="1.4"/></svg>
<div class="a" style="left:63px;top:522px;font-size:8.2px;color:#555">Пошук</div>
<svg class="a" style="left:107px;top:520px" width="14" height="14"><rect x="0" y="3" width="9" height="10" fill="#1a1a1a"/><rect x="4" y="1" width="9" height="8" fill="#bdbdbd"/><rect x="4" y="1" width="5" height="8" fill="#777"/></svg>
<svg class="a" style="left:135px;top:519px" width="17" height="16"><path d="M1 3h6l2 2h7v10H1z" fill="#f1c232"/><rect x="1" y="6" width="15" height="9" fill="#f7d04d"/><rect x="4" y="11" width="9" height="3" fill="#1f6fc4"/></svg>
<div class="a" style="left:141px;top:537px;width:5px;height:2px;background:#777;border-radius:1px"></div>
<svg class="a" style="left:163px;top:516px" width="20" height="20"><path d="M9 5c4 0 7 3 7 7s-3 6-6 6l-3 2v-2.5c-2.5-1-4-3.2-4-5.5 0-4 3-7 6-7z" fill="#7d52c9"/><path d="M7 9c1 3 2 4 5 5" stroke="#fff" stroke-width="1.2" fill="none"/><circle cx="15.5" cy="4.5" r="4" fill="#e23a3a"/><text x="14" y="7" font-size="5.5" fill="#fff" font-family="Liberation Sans">1</text></svg>
<div class="a" style="left:170px;top:537px;width:5px;height:2px;background:#777;border-radius:1px"></div>
<svg class="a" style="left:190px;top:517px" width="20" height="19"><circle cx="8.5" cy="10" r="7.5" fill="#dd4b39"/><path d="M8.5 10 L1.6 13 A7.5 7.5 0 0 0 12 16.6z" fill="#2a9a4a"/><path d="M8.5 10 L12 16.6 A7.5 7.5 0 0 0 16 10z" fill="#f4c20d"/><circle cx="8.5" cy="10" r="3" fill="#fff"/><circle cx="8.5" cy="10" r="2.3" fill="#3a7be0"/><circle cx="15" cy="5" r="4" fill="#b79b7e"/></svg>
<div class="a" style="left:196px;top:537px;width:5px;height:2px;background:#777;border-radius:1px"></div>
<svg class="a" style="left:218px;top:519px" width="15" height="16"><path d="M3 4c3-3 8-3 10 0l-2 3c-2-2-4-2-6 0z" fill="#1b3f7a"/><path d="M2 9l3 4 7-8" stroke="#111" stroke-width="1.6" fill="none"/></svg>
<svg class="a" style="left:246px;top:519px" width="15" height="15"><circle cx="7.5" cy="7.5" r="7" fill="#2aa0d8"/><path d="M3.5 7.3l7-3-1.2 6.5-2.2-1.8-1.2 1.2v-2z" fill="#fff"/></svg>
<svg class="a" style="left:273px;top:519px" width="15" height="16"><circle cx="7.5" cy="7.5" r="6.3" fill="none" stroke="#25a244" stroke-width="1.5"/><path d="M1.5 14.5l1-3.2" stroke="#25a244" stroke-width="1.5"/><path d="M5.2 5c0 3 2 5 5 5.5" stroke="#25a244" stroke-width="1.5" fill="none"/></svg>
<svg class="a" style="left:300px;top:519px" width="16" height="16"><path d="M8 1a7 7 0 0 1 7 7c0 2-1.5 3-3.5 3-1.5 0-2.5-.5-2.5-1.5 1-2 0-4-2.5-4C4 5.5 2 8 2.2 11 1.4 9 1 8 1 8a7 7 0 0 1 7-7z" fill="#1a9bd7"/><path d="M2.2 11c.8 3 3.5 4.5 6 4.5 2.5 0 5-1.5 6-3.5-2 .5-4 0-5-1.5-1 1-5 2-7 .5z" fill="#40b86a"/><path d="M1 11.5h6v4H2z" fill="#d9821e"/></svg>
<div class="a" style="left:324px;top:515px;width:24px;height:25px;background:#eef2fa;border-radius:4px"></div>
<svg class="a" style="left:328px;top:518px" width="15" height="16"><rect x="3" y="1" width="12" height="14" rx="1.5" fill="#21a366"/><rect x="9" y="1" width="6" height="14" fill="#107c41"/><rect x="0" y="5" width="8" height="8" rx="1" fill="#185c37"/><text x="1.8" y="11.5" font-size="6.5" fill="#fff" font-family="Liberation Sans" font-weight="bold">x</text></svg>
<div class="a" style="left:331px;top:537px;width:9px;height:2px;background:#2a6fc0;border-radius:1px"></div>
<svg class="a" style="left:355px;top:519px" width="16" height="16"><circle cx="8" cy="8" r="7.8" fill="#1f5fe0"/><text x="2.5" y="9.5" font-size="3.5" fill="#fff" font-family="Liberation Sans">zoom</text></svg>
<div class="a" style="left:360px;top:537px;width:5px;height:2px;background:#777;border-radius:1px"></div>
<!-- tray -->
<svg class="a" style="left:692px;top:517px" width="20" height="18"><path d="M3 15h12a3.5 3.5 0 0 0 0-7 5 5 0 0 0-9.5-1A4 4 0 0 0 3 15z" fill="#c9d3e6"/><circle cx="12.5" cy="5" r="4.5" fill="#c8282b"/><text x="11" y="7.5" font-size="6" fill="#fff" font-family="Liberation Sans" font-weight="bold">1</text></svg>
<div class="a" style="left:712px;top:517px;font-size:7.5px;color:#222">9°C</div>
<div class="a" style="left:712px;top:527.5px;font-size:7.5px;color:#444">Pochmurnie</div>
<svg class="a" style="left:793px;top:523px" width="10" height="7"><polyline points="1,5.5 5,1.5 9,5.5" fill="none" stroke="#222" stroke-width="1.2"/></svg>
<svg class="a" style="left:811px;top:519px" width="16" height="14"><path d="M3 2v6M1.5 4.5h3" stroke="#4a64b5" stroke-width="1.8"/><path d="M7 11l7-7-3 9-1-3z" fill="none" stroke="#4a64b5" stroke-width="1"/></svg>
<div class="a" style="left:834.5px;top:522.5px;font-size:6.9px;color:#222">ENG</div>
<svg class="a" style="left:860px;top:519px" width="50" height="14"><path d="M1 5a8 8 0 0 1 11 0M3 7.5a5 5 0 0 1 7 0M5 10a2 2 0 0 1 3 0" fill="none" stroke="#222" stroke-width="1.1"/><path d="M17 5h2l3-3v10l-3-3h-2z" fill="none" stroke="#222" stroke-width="1"/><path d="M24 4c1 1.5 1 4.5 0 6M26 2.5c2 2.5 2 6.5 0 9" fill="none" stroke="#222" stroke-width="0.9"/><rect x="32" y="4" width="14" height="7" rx="2" fill="none" stroke="#222" stroke-width="1"/><rect x="34" y="6" width="10" height="3" fill="#222"/></svg>
<div class="a" style="left:919px;top:517px;width:30px;text-align:right;font-size:7px;color:#222">12:36</div>
<div class="a" style="left:900px;top:528px;width:49px;text-align:right;font-size:7.2px;color:#222">09.04.2026</div>

<!-- tooltip -->
<div class="a" style="left:117px;top:147px;width:72px;height:4px;background:#f7f7f7"></div><div class="a" style="left:188px;top:138px;width:304px;height:12.5px;background:#fff;border:1px solid #8a8a8a;border-radius:3px"></div>
<div class="a" style="left:251px;top:140px;font-size:7.6px;color:#555">ня_підстановки; <b style="color:#1e1e1e;font-size:7.3px">масив_таблиці</b>; номер_стовпця; [точність_пошуку])</div>

<svg class="a" style="left:7px;top:2px" width="244" height="146" viewBox="7 2 244 146">
 <defs>
  <linearGradient id="face" x1="0" y1="0" x2="0" y2="1"><stop offset="0" stop-color="#cfaa9c"/><stop offset="0.6" stop-color="#c29c90"/><stop offset="1" stop-color="#b89186"/></linearGradient>
  <linearGradient id="hair" x1="0" y1="0" x2="1" y2="0"><stop offset="0" stop-color="#c7beb2"/><stop offset="0.5" stop-color="#bdb4a8"/><stop offset="1" stop-color="#c4bbb0"/></linearGradient>
  <filter id="bl" x="-5%" y="-5%" width="110%" height="110%"><feGaussianBlur stdDeviation="0.8"/></filter>
 </defs>
 <rect x="7" y="2" width="244" height="72" fill="#0b58c4"/>
 <rect x="7" y="73.5" width="244" height="74.5" fill="#fcd000"/>
 <text x="41.5" y="65.5" font-family="Liberation Sans" font-weight="bold" font-size="21" fill="#efd54e" stroke="#efd54e" stroke-width="1.1" textLength="169" lengthAdjust="spacingAndGlyphs">ЗСУ, ТРИМАЙТЕСЬ</text>
 <text x="27" y="95.5" font-family="Liberation Sans" font-weight="bold" font-size="12.8" fill="#204f7a" stroke="#204f7a" stroke-width="0.9" textLength="200" lengthAdjust="spacingAndGlyphs">МЕНІ ЩЕ НАВЧАТИ ВАШИХ ДІТЕЙ</text>
 <g filter="url(#bl)">
 <!-- hair -->
 <path d="M102 56 C94 38 96 14 111 6 C123 0 151 0 163 6 C178 15 179 38 171 52 C167 46 165 38 164 30 C161 16 151 9 136 9 C122 9 112 16 110 30 C108 40 106 48 102 56 Z" fill="url(#hair)"/>
 <!-- neck + chest -->
 <path d="M113 62 L157 62 L158 86 C152 100 146 116 136 124 C126 116 120 100 112 86 Z" fill="#c49d90"/>
 <!-- face -->
 <path d="M109 30 C110 16 121 9 136 9 C152 9 163 16 163 32 C163 48 160 62 154 68 C148 73 142 75 136 75 C128 75 121 72 116 66 C111 58 109 46 109 30 Z" fill="url(#face)"/>
 <!-- features -->
 <path d="M118 31 q6 -2.5 12 0 M143 31 q6 -2.5 12 0" stroke="#8c6a5e" stroke-width="1.3" fill="none"/>
 <ellipse cx="124" cy="35" rx="3.6" ry="1.6" fill="#654a42"/><ellipse cx="150" cy="35" rx="3.6" ry="1.6" fill="#654a42"/>
 <path d="M129 62 q7 1 15 0" stroke="#9c6a62" stroke-width="1.6" fill="none"/>
 <path d="M133 50 q4 2 8 0" stroke="#a37f74" stroke-width="1.2" fill="none"/>
 <path d="M114 60 q6 10 14 12 M158 60 q-6 10 -14 12" stroke="#b48b7e" stroke-width="1" fill="none"/>
 <!-- shirt -->
 <path d="M97 148 L101 94 C105 88 109 85 112 84 C120 100 128 116 136 124 C144 116 152 100 157 82 C163 85 168 90 170 96 L177 148 Z" fill="#a0a8b3"/>
 <!-- cardigan left -->
 <path d="M45 148 C55 126 66 110 78 100 C90 91 102 85 112 81 C108 98 102 122 97 148 Z" fill="#1a1a1d"/>
 <!-- cardigan right -->
 <path d="M153 77 C167 81 183 89 195 100 C205 112 210 130 216 148 L177 148 C175 128 170 104 163 90 Z" fill="#1a1a1d"/>
 <!-- necklace -->
 <path d="M116 80 C120 100 128 116 136 122 C144 116 152 100 155 80" stroke="#7d746e" stroke-width="0.9" fill="none"/>
 <path d="M113 82 C118 104 128 122 136 127 C144 122 154 104 157 82" stroke="#7d746e" stroke-width="0.7" fill="none"/>
 </g>
</svg>

</div>
<div id="chat">
  <div class="a" style="left:11.5px;top:33px;width:273px;height:24px;border:1.2px solid #6c6c6c;border-radius:6px;"></div>
  <svg class="a" style="left:17px;top:39px" width="14" height="14" viewBox="0 0 14 14"><circle cx="5.8" cy="5.8" r="4.3" fill="none" stroke="#555" stroke-width="1.2"/><line x1="8.9" y1="8.9" x2="11.8" y2="11.8" stroke="#555" stroke-width="1.3"/></svg>
  <div class="a" style="left:34.5px;top:38.5px;font-size:10.8px;color:#7a7a7a">Search chat</div>
  <div class="av" style="left:8px;top:80.0px;background:#d45d10">ВП</div>
  <div class="nm" style="left:44px;top:63.7px">Виробничі ПМУ<span class="ts">01:46:16</span></div>
  <div class="bb" style="left:38px;top:80.0px;width:26px">+</div>
  <div class="av" style="left:8px;top:143.5px;background:#1f9a86">НШ</div>
  <div class="nm" style="left:44px;top:127.2px">Наталія Шевченко<span class="ts">01:46:22</span></div>
  <div class="bb" style="left:38px;top:143.5px;width:26px">+</div>
  <div class="av" style="left:8px;top:207.0px;background:#2aa55f">КЛ</div>
  <div class="nm" style="left:44px;top:190.7px">комплаєнс-менеджер...<span class="ts">01:47:47</span></div>
  <div class="bb" style="left:38px;top:207.0px;width:96px">не через крапку</div>
  <div class="av" style="left:8px;top:270.5px;background:#1f9a86">НШ</div>
  <div class="nm" style="left:44px;top:254.2px">Наталія Шевченко<span class="ts">01:47:52</span></div>
  <div class="bb" style="left:38px;top:270.5px;width:23px">/</div>
  <div class="av" style="left:8px;top:334.0px;background:#2aa55f">КЛ</div>
  <div class="nm" style="left:44px;top:317.7px">комплаєнс-менеджер...<span class="ts">01:48:13</span></div>
  <div class="bb" style="left:38px;top:334.0px;width:111px">не звичний формат</div>
  <div class="av" style="left:8px;top:397.5px;background:#2aa55f">КЛ</div>
  <div class="nm" style="left:44px;top:381.2px">комплаєнс-менеджер...<span class="ts">01:49:53</span></div>
  <div class="bb" style="left:38px;top:397.5px;width:119px">місто в різних місцях</div>
  <div class="av" style="left:8px;top:461.0px;background:#1f9a86">НШ</div>
  <div class="nm" style="left:44px;top:444.7px">Наталія Шевченко<span class="ts">01:50:03</span></div>
  <div class="bb" style="left:38px;top:461.0px;width:46px">Місто</div>
  <div class="a" style="left:38px;top:501px;width:26px;height:22px;background:#f0f0f4;border-radius:9px 9px 0 0;font-size:10.5px;text-align:center;line-height:32px;overflow:hidden">+</div>
  <div class="a" style="left:0;top:523.5px;width:297px;height:1px;background:#f4f4f4"></div>
</div>

</body></html>
